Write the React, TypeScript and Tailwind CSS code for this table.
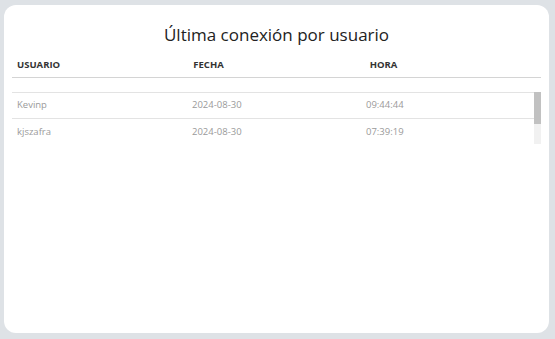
import React from "react";

const rows = [
  { u: "Kevinp", f: "2024-08-30", h: "09:44:44" },
  { u: "kjszafra", f: "2024-08-30", h: "07:39:19" },
];

export default function App() {
  return (
    <div
      className="w-[555px] h-[339px] bg-[#dee2e6] pt-[5px] pl-[4px] pr-[6px] pb-[6px]"
      style={{ fontFamily: '"Open Sans", "Noto Sans", sans-serif' }}
    >
      <div className="w-full h-full bg-white rounded-[12px] pt-[18px] px-[8px]">
        <h1 className="text-center text-[17px] leading-[24px] text-[#222] font-normal">
          Última conexión por usuario
        </h1>
        <div className="mt-[6px] grid grid-cols-3 border-b border-[#d4d4d4] h-[25px] items-center">
          <div className="pl-[5px] text-[9.5px] font-bold text-[#333]">USUARIO</div>
          <div className="pl-[5px] text-[9.5px] font-bold text-[#333]">FECHA</div>
          <div className="pl-[5px] text-[9.5px] font-bold text-[#333]">HORA</div>
        </div>
        <div className="mt-[14px] h-[52px] flex">
          <div className="flex-1 border-t border-[#e3e3e3] pl-[0px]">
            {rows.map((r, i) => (
              <div
                key={r.u}
                className={
                  i === 0
                    ? "grid grid-cols-3 h-[26px] items-center border-b border-[#e3e3e3] text-[9.5px] text-[#9a9a9a]"
                    : "grid grid-cols-3 h-[26px] items-center text-[9.5px] text-[#9a9a9a]"
                }
              >
                <div className="pl-[5px]">{r.u}</div>
                <div className="pl-[6px]">{r.f}</div>
                <div className="pl-[6px]">{r.h}</div>
              </div>
            ))}
          </div>
          <div className="w-[7px] h-full bg-[#f1f1f1] flex flex-col">
            <div className="h-[32px] bg-[#c1c1c1]" />
          </div>
        </div>
      </div>
    </div>
  );
}
